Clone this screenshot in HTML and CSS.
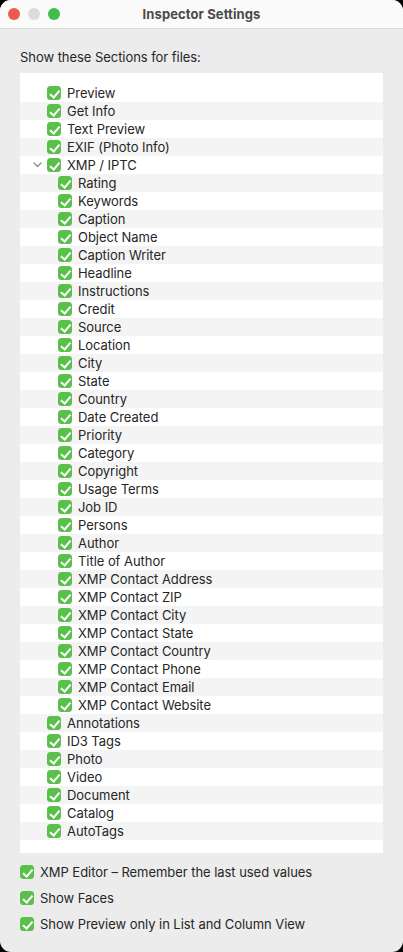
FILE: index.html
```html
<!DOCTYPE html>
<html>
<head>
<meta charset="utf-8">
<link rel="stylesheet" href="styles.css">
</head>
<body>
<div class="window">
  <div class="titlebar">
    <div class="lights">
      <span class="light red"></span>
      <span class="light grey"></span>
      <span class="light green"></span>
    </div>
    <div class="title">Inspector Settings</div>
  </div>
  <div class="content">
    <div class="heading">Show these Sections for files:</div>
    <div class="list" id="list"></div>
    <div class="options">
      <div class="opt"><span class="cb"></span><span>XMP Editor – Remember the last used values</span></div>
      <div class="opt"><span class="cb"></span><span>Show Faces</span></div>
      <div class="opt"><span class="cb"></span><span>Show Preview only in List and Column View</span></div>
    </div>
  </div>
</div>
<script src="app.js"></script>
</body>
</html>
```
FILE: app.js
```js
(function () {
  const firstItems = ["Preview","Get Info","Text Preview","EXIF (Photo Info)"];
  const subItems = ["Rating","Keywords","Caption","Object Name","Caption Writer","Headline","Instructions","Credit","Source","Location","City","State","Country","Date Created","Priority","Category","Copyright","Usage Terms","Job ID","Persons","Author","Title of Author","XMP Contact Address","XMP Contact ZIP","XMP Contact City","XMP Contact State","XMP Contact Country","XMP Contact Phone","XMP Contact Email","XMP Contact Website"];
  const lastItems = ["Annotations","ID3 Tags","Photo","Video","Document","Catalog","AutoTags"];
  const rows = [];
  firstItems.forEach(t => rows.push({t: t, l: 0}));
  rows.push({t: "XMP / IPTC", l: 0, d: true});
  subItems.forEach(t => rows.push({t: t, l: 1}));
  lastItems.forEach(t => rows.push({t: t, l: 0}));
  rows.push({t: "", l: 0, empty: true});
  const list = document.getElementById('list');
  rows.forEach((r, i) => {
    const row = document.createElement('div');
    row.className = 'row' + (i % 2 ? ' alt' : '') + (r.l ? ' l1' : '');
    if (!r.empty) {
      const disc = document.createElement('span');
      disc.className = 'disc';
      if (r.d) disc.innerHTML = '<svg width="9" height="6" viewBox="0 0 9 6"><path d="M1 1 L4.5 4.5 L8 1" fill="none" stroke="#8a8a8a" stroke-width="1.3" stroke-linecap="round" stroke-linejoin="round"/></svg>';
      row.appendChild(disc);
      const cb = document.createElement('span');
      cb.className = 'cb';
      row.appendChild(cb);
      const s = document.createElement('span');
      s.textContent = r.t;
      row.appendChild(s);
    }
    list.appendChild(row);
  });
})();
```
FILE: styles.css
```css
html, body { margin: 0; padding: 0; background: #000; }
body { width: 403px; height: 952px; overflow: hidden; font-family: Inter, "Noto Sans", sans-serif; font-size: 13px; color: #262626; letter-spacing: -0.05px; }
.window { width: 403px; height: 952px; background: #ececec; border-radius: 11px; overflow: hidden; display: flex; flex-direction: column; }
.titlebar { height: 28px; background: #fafafa; border-bottom: 1px solid #dcdcdc; position: relative; display: flex; align-items: center; justify-content: center; flex-shrink: 0; }
.lights { position: absolute; left: 8px; top: 8px; display: flex; gap: 8px; }
.light { width: 12px; height: 12px; border-radius: 50%; display: block; }
.red { background: #ee5a52; }
.grey { background: #dcdcdc; }
.green { background: #3ebd4a; }
.title { font-weight: 700; font-size: 13px; color: #4a4a4a; letter-spacing: 0.1px; }
.content { padding: 20px 20px 0 20px; }
.heading { line-height: 16px; margin-bottom: 8px; }
.list { background: #fff; padding-top: 11px; height: 769px; overflow: hidden; }
.row { height: 18px; display: flex; align-items: center; padding-left: 12px; }
.row.alt { background: #f4f4f4; }
.row.l1 { padding-left: 23px; }
.disc { width: 15px; height: 18px; display: flex; align-items: center; justify-content: flex-start; padding-left: 1px; box-sizing: border-box; }
.cb { width: 14px; height: 14px; border-radius: 3.5px; background: #5bbf4c; margin-right: 6px; flex-shrink: 0; position: relative; }
.cb::after { content: ""; position: absolute; left: 4.5px; top: 1.5px; width: 3.5px; height: 7.5px; border-right: 2px solid #fff; border-bottom: 2px solid #fff; transform: rotate(40deg); }
.options { padding-top: 11px; display: flex; flex-direction: column; gap: 10px; }
.opt { display: flex; align-items: center; height: 16px; }
```
